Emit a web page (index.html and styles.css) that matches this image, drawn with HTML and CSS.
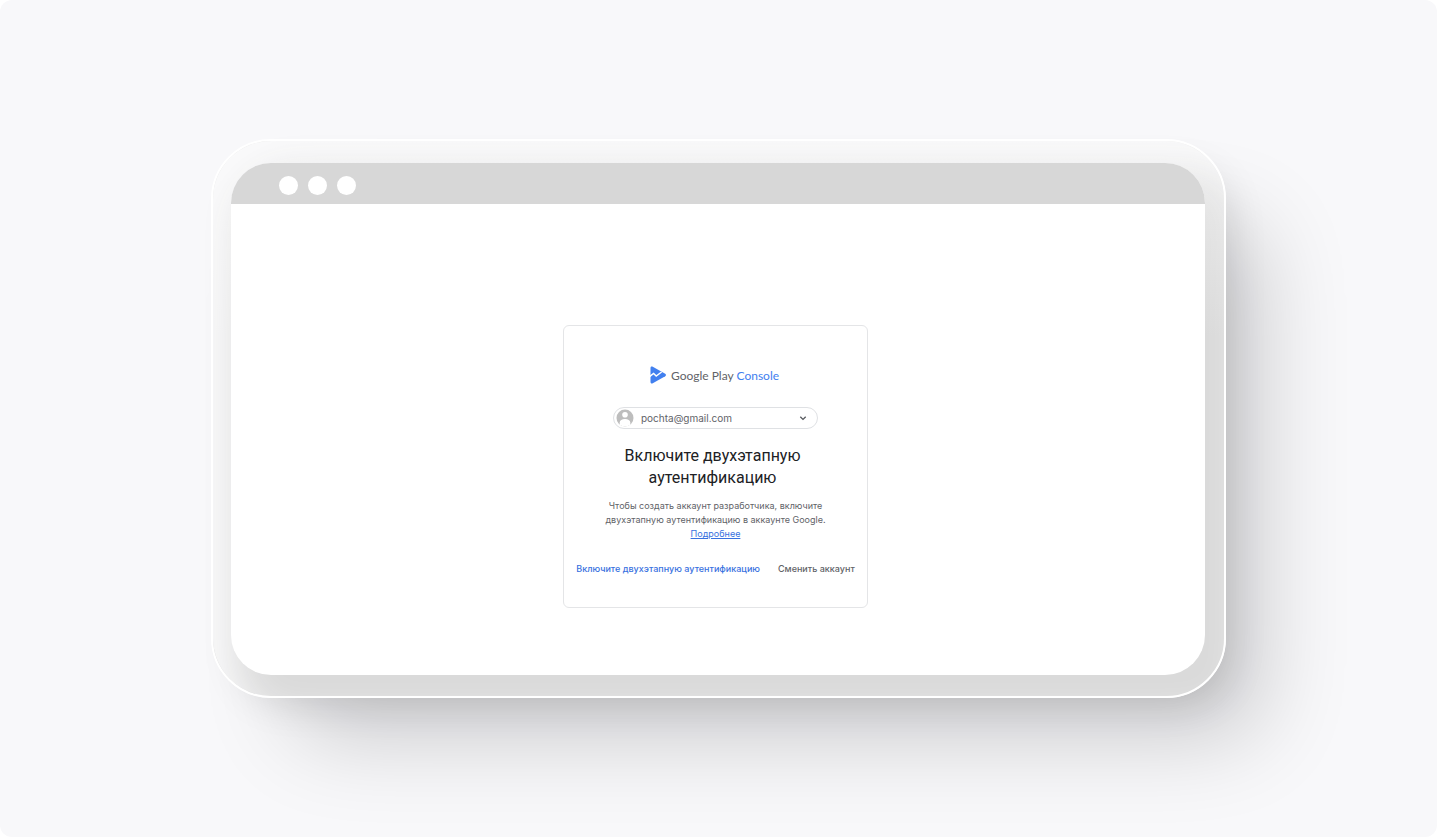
FILE: index.html
```html
<!DOCTYPE html>
<html lang="ru">
<head>
    <title>Google Play Console</title>
    <meta charset="UTF-8">
    <meta name="viewport" content="width=device-width, initial-scale=1.0">
    <link rel="stylesheet" href="styles.css">
</head>

<body>
    <div class="stage">
        <div class="frame">
            <div class="screen">
                <div class="bar">
                    <span class="dot"></span>
                    <span class="dot"></span>
                    <span class="dot"></span>
                </div>
                <main class="content">
                    <section class="card">
                        <div class="logo">
                            <svg width="16" height="18" viewBox="0 0 16 18" aria-hidden="true">
                                <path d="M.5 2C.5.6 1.6.2 2.8.8L15.2 7.8c1 .6 1 1.8 0 2.4L2.8 17.2C1.6 17.8.5 17.4.5 16z" fill="#4280ef"/>
                                <path d="M-.5 10.6 3.6 7.4 6.2 10 11.6 6" fill="none" stroke="#fff" stroke-width="1.5"/>
                            </svg>
                            <span>Google Play <span class="console">Console</span></span>
                        </div>

                        <label class="account">
                            <svg width="18" height="18" viewBox="0 0 18 18" aria-hidden="true">
                                <circle cx="9" cy="9" r="8.5" fill="#bdbdbd"/>
                                <circle cx="9" cy="5.8" r="2.8" fill="#fff"/>
                                <path d="M3.7 15.7V13.6C3.7 11.4 6 10.1 9 10.1s5.3 1.3 5.3 3.5v2.1A8.5 8.5 0 0 1 9 17.5a8.5 8.5 0 0 1-5.3-1.8z" fill="#fff"/>
                            </svg>
                            <select aria-label="Аккаунт">
                                <option>pochta@gmail.com</option>
                            </select>
                            <svg width="8" height="8" viewBox="0 0 8 8" aria-hidden="true">
                                <path d="M1.3 2.8 4 5.4 6.7 2.8" fill="none" stroke="#55585d" stroke-width="1.3"/>
                            </svg>
                        </label>

                        <h1>Включите двухэтапную<br>аутентификацию</h1>
                        <p>Чтобы создать аккаунт разработчика, включите<br>двухэтапную аутентификацию в аккаунте Google.<br><a href="#">Подробнее</a></p>

                        <div class="actions">
                            <button type="button" class="primary">Включите двухэтапную аутентификацию</button>
                            <button type="button">Сменить аккаунт</button>
                        </div>
                    </section>
                </main>
            </div>
        </div>
    </div>
</body>
</html>
```

FILE: styles.css
```css
* { box-sizing: border-box; }
body { margin: 0; font-family: Inter, "Liberation Sans", sans-serif; color: #5f6368; background: #fff; }

.stage { display: flex; min-height: 100vh; padding: 139px 211px; background: #f8f8fa; border-radius: 12px; overflow: hidden; }
.frame {
    flex: 1; display: flex; padding: 22px 19px 21px 18px; border: 2px solid #fff; border-radius: 60px;
    background: linear-gradient(#ebebeb, #dadada 35%);
    box-shadow: inset 22px 24px 40px #fafafb, 16px 18px 40px -14px rgba(0, 0, 0, .12), 58px 62px 90px -24px rgba(0, 0, 10, .19);
}
.screen { flex: 1; display: flex; flex-direction: column; border-radius: 40px; background: #fff; overflow: hidden; }
.bar { display: flex; align-items: center; gap: 10px; height: 41px; padding: 4px 48px 0; background: #d7d7d7; }
.dot { width: 19px; height: 19px; border-radius: 50%; background: #fff; }
.content { flex: 1; display: flex; justify-content: center; align-items: flex-start; padding: 121px 5px 40px 0; }

.card { width: 305px; padding: 40px 8px 31px; border: 1px solid #e4e5e7; border-radius: 6px; text-align: center; }
.logo { display: flex; justify-content: center; align-items: center; gap: 5px; height: 18px; padding-right: 2px; font-family: Lato, sans-serif; font-size: 12px; color: #5f6368; }
.console { color: #4280ef; }

.account { display: flex; align-items: center; width: 205px; height: 22px; margin: 23px auto 16px; padding: 0 10px 0 2px; border: 1px solid #dfe1e4; border-radius: 11px; }
.account select { flex: 1; min-width: 0; padding: 0 7px; border: 0; appearance: none; background: none; font-family: Inter, sans-serif; font-size: 10px; color: #5f6368; }

h1 { margin: 0 0 10px; padding-right: 6px; font-family: Roboto, sans-serif; font-size: 16px; font-weight: 400; line-height: 22px; color: #202124; }
p { margin: 0; font-size: 9px; line-height: 14px; }
a { color: #3871e0; }

.actions { display: flex; justify-content: center; gap: 18px; margin-top: 21px; }
button { padding: 0; border: 0; background: none; font-family: inherit; font-size: 9px; font-weight: 500; line-height: 14px; color: #5f6368; white-space: nowrap; cursor: pointer; }
.primary { color: #3871e0; }
```
